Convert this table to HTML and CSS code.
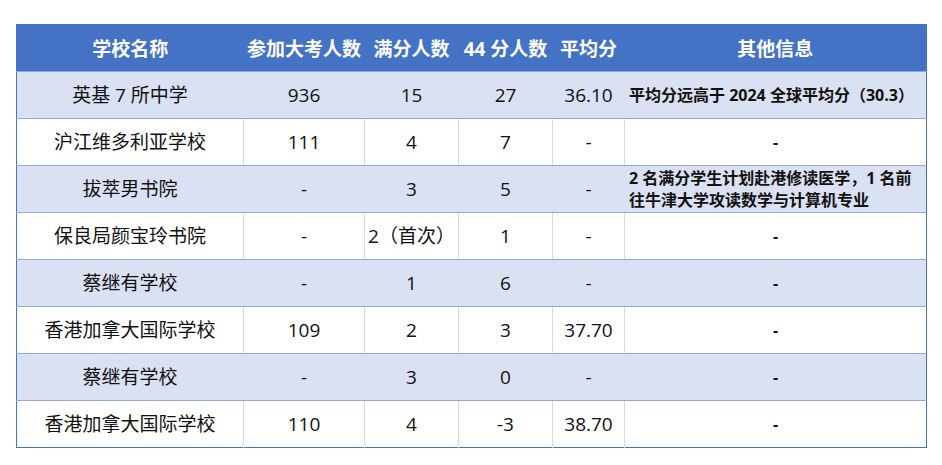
FILE: index.html
```html
<!DOCTYPE html>
<html lang="zh-CN">
<head>
<meta charset="utf-8">
<title>成绩表</title>
<link rel="stylesheet" href="styles.css">
</head>
<body>
<div class="wrap">
<table class="score">
  <colgroup>
    <col class="c1"><col class="c2"><col class="c3"><col class="c4"><col class="c5"><col class="c6">
  </colgroup>
  <thead>
    <tr><th>学校名称</th><th>参加大考人数</th><th>满分人数</th><th>44 分人数</th><th>平均分</th><th>其他信息</th></tr>
  </thead>
  <tbody>
    <tr class="alt"><td>英基 7 所中学</td><td>936</td><td>15</td><td>27</td><td>36.10</td><td class="info left">平均分远高于 2024 全球平均分（30.3）</td></tr>
    <tr><td>沪江维多利亚学校</td><td>111</td><td>4</td><td>7</td><td>-</td><td class="info">-</td></tr>
    <tr class="alt"><td>拔萃男书院</td><td>-</td><td>3</td><td>5</td><td>-</td><td class="info left">2 名满分学生计划赴港修读医学，1 名前<br>往牛津大学攻读数学与计算机专业</td></tr>
    <tr><td>保良局颜宝玲书院</td><td>-</td><td>2（首次）</td><td>1</td><td>-</td><td class="info">-</td></tr>
    <tr class="alt"><td>蔡继有学校</td><td>-</td><td>1</td><td>6</td><td>-</td><td class="info">-</td></tr>
    <tr><td>香港加拿大国际学校</td><td>109</td><td>2</td><td>3</td><td>37.70</td><td class="info">-</td></tr>
    <tr class="alt"><td>蔡继有学校</td><td>-</td><td>3</td><td>0</td><td>-</td><td class="info">-</td></tr>
    <tr><td>香港加拿大国际学校</td><td>110</td><td>4</td><td>-3</td><td>38.70</td><td class="info">-</td></tr>
  </tbody>
</table>
</div>
</body>
</html>
```

FILE: styles.css
```css
html, body {
  margin: 0;
  padding: 0;
  background: #ffffff;
}
.wrap {
  padding: 24px 0 0 16px;
}
.score {
  border-collapse: collapse;
  table-layout: fixed;
  width: 910px;
  border: 1px solid #4472C4;
  font-family: "Open Sans", "Noto Sans CJK SC", sans-serif;
  color: #111111;
}
.c1 { width: 227px; }
.c2 { width: 121px; }
.c3 { width: 94px; }
.c4 { width: 94px; }
.c5 { width: 72px; }
.c6 { width: 302px; }
.score th {
  background: #4472C4;
  color: #ffffff;
  font-weight: 700;
  font-size: 19px;
  height: 46px;
  padding: 0;
  text-align: center;
  border-bottom: 1px solid #8EA9DB;
  white-space: nowrap;
}
.score td {
  height: 46px;
  padding: 0 2px;
  text-align: center;
  font-size: 19px;
  border-bottom: 1px solid #8EA9DB;
  border-left: 1px solid #D9D9D9;
  white-space: nowrap;
  line-height: 22px;
}
.score td:first-child { border-left: none; }
.score tr.alt td {
  background: #D9E1F2;
  border-left-color: #D9E1F2;
}
.score tr:last-child td { border-bottom: none; }
.score td.info {
  font-weight: 700;
  font-size: 16px;
}
.score td.left {
  text-align: left;
  padding-left: 4px;
}
```
